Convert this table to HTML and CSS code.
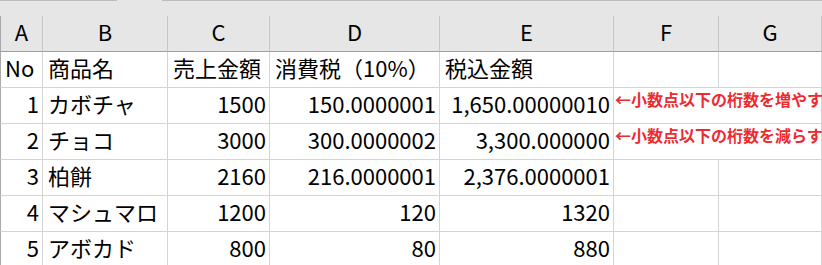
FILE: index.html
```html
<!DOCTYPE html>
<html lang="ja">
<head>
<meta charset="utf-8">
<link rel="stylesheet" href="styles.css">
</head>
<body>
<div class="sheet">
  <div class="topband">
    <div class="tab-line tab-left"></div>
    <div class="tab-gap"></div>
    <div class="tab-line tab-right"></div>
  </div>
  <div class="grid">
    <div class="hd first">A</div>
    <div class="hd">B</div>
    <div class="hd">C</div>
    <div class="hd">D</div>
    <div class="hd">E</div>
    <div class="hd">F</div>
    <div class="hd">G</div>

    <div class="c first">No</div>
    <div class="c">商品名</div>
    <div class="c">売上金額</div>
    <div class="c">消費税（10%）</div>
    <div class="c">税込金額</div>
    <div class="c"></div>
    <div class="c"></div>

    <div class="c first num">1</div>
    <div class="c">カボチャ</div>
    <div class="c num">1500</div>
    <div class="c num">150.0000001</div>
    <div class="c num">1,650.00000010</div>
    <div class="c note"><span class="note-text">←小数点以下の桁数を増やす</span></div>
    <div class="c covered"></div>

    <div class="c first num">2</div>
    <div class="c">チョコ</div>
    <div class="c num">3000</div>
    <div class="c num">300.0000002</div>
    <div class="c num">3,300.000000</div>
    <div class="c note"><span class="note-text">←小数点以下の桁数を減らす</span></div>
    <div class="c covered"></div>

    <div class="c first num">3</div>
    <div class="c">柏餅</div>
    <div class="c num">2160</div>
    <div class="c num">216.0000001</div>
    <div class="c num">2,376.0000001</div>
    <div class="c"></div>
    <div class="c"></div>

    <div class="c first num">4</div>
    <div class="c">マシュマロ</div>
    <div class="c num">1200</div>
    <div class="c num">120</div>
    <div class="c num">1320</div>
    <div class="c"></div>
    <div class="c"></div>

    <div class="c first num">5</div>
    <div class="c">アボカド</div>
    <div class="c num">800</div>
    <div class="c num">80</div>
    <div class="c num">880</div>
    <div class="c"></div>
    <div class="c"></div>
  </div>
</div>
</body>
</html>
```

FILE: styles.css
```css
html, body {
  margin: 0;
  padding: 0;
  background: #ffffff;
  overflow: hidden;
}

.sheet {
  width: 822px;
  height: 265px;
  overflow: hidden;
  font-family: "Noto Sans CJK JP", "Noto Sans", sans-serif;
  font-size: 22px;
  color: #000;
}

.topband {
  display: flex;
  height: 16px;
  background: #e6e6e6;
}

.tab-line {
  border-top: 1px solid #bdbdbd;
}

.tab-left {
  width: 117px;
}

.tab-gap {
  width: 45px;
}

.tab-right {
  flex: 1;
}

.grid {
  display: grid;
  grid-template-columns: 43px 125px 102px 170px 174px 105px 103px;
  grid-auto-rows: 36px;
}

.hd {
  box-sizing: border-box;
  background: #e6e6e6;
  border-right: 1px solid #c6c6c6;
  border-bottom: 1px solid #9e9e9e;
  display: flex;
  align-items: flex-end;
  justify-content: center;
  padding-bottom: 4px;
  line-height: 31px;
}

.c {
  box-sizing: border-box;
  border-right: 1px solid #d4d4d4;
  border-bottom: 1px solid #d4d4d4;
  display: flex;
  align-items: flex-end;
  padding: 0 4px 4px 5px;
  line-height: 31px;
  white-space: nowrap;
  min-width: 0;
}

.first {
  border-left: 1px solid #a9a9a9;
  padding-left: 4px;
}

.hd.first {
  padding-left: 0;
}

.num {
  justify-content: flex-end;
  padding-right: 3px;
}

.note {
  border-right: none;
  overflow: visible;
  padding-left: 1px;
  padding-bottom: 12px;
  position: relative;
  z-index: 1;
}

.note-text {
  font-size: 16px;
  font-weight: bold;
  line-height: 24px;
  color: #ee2a2f;
}
```
